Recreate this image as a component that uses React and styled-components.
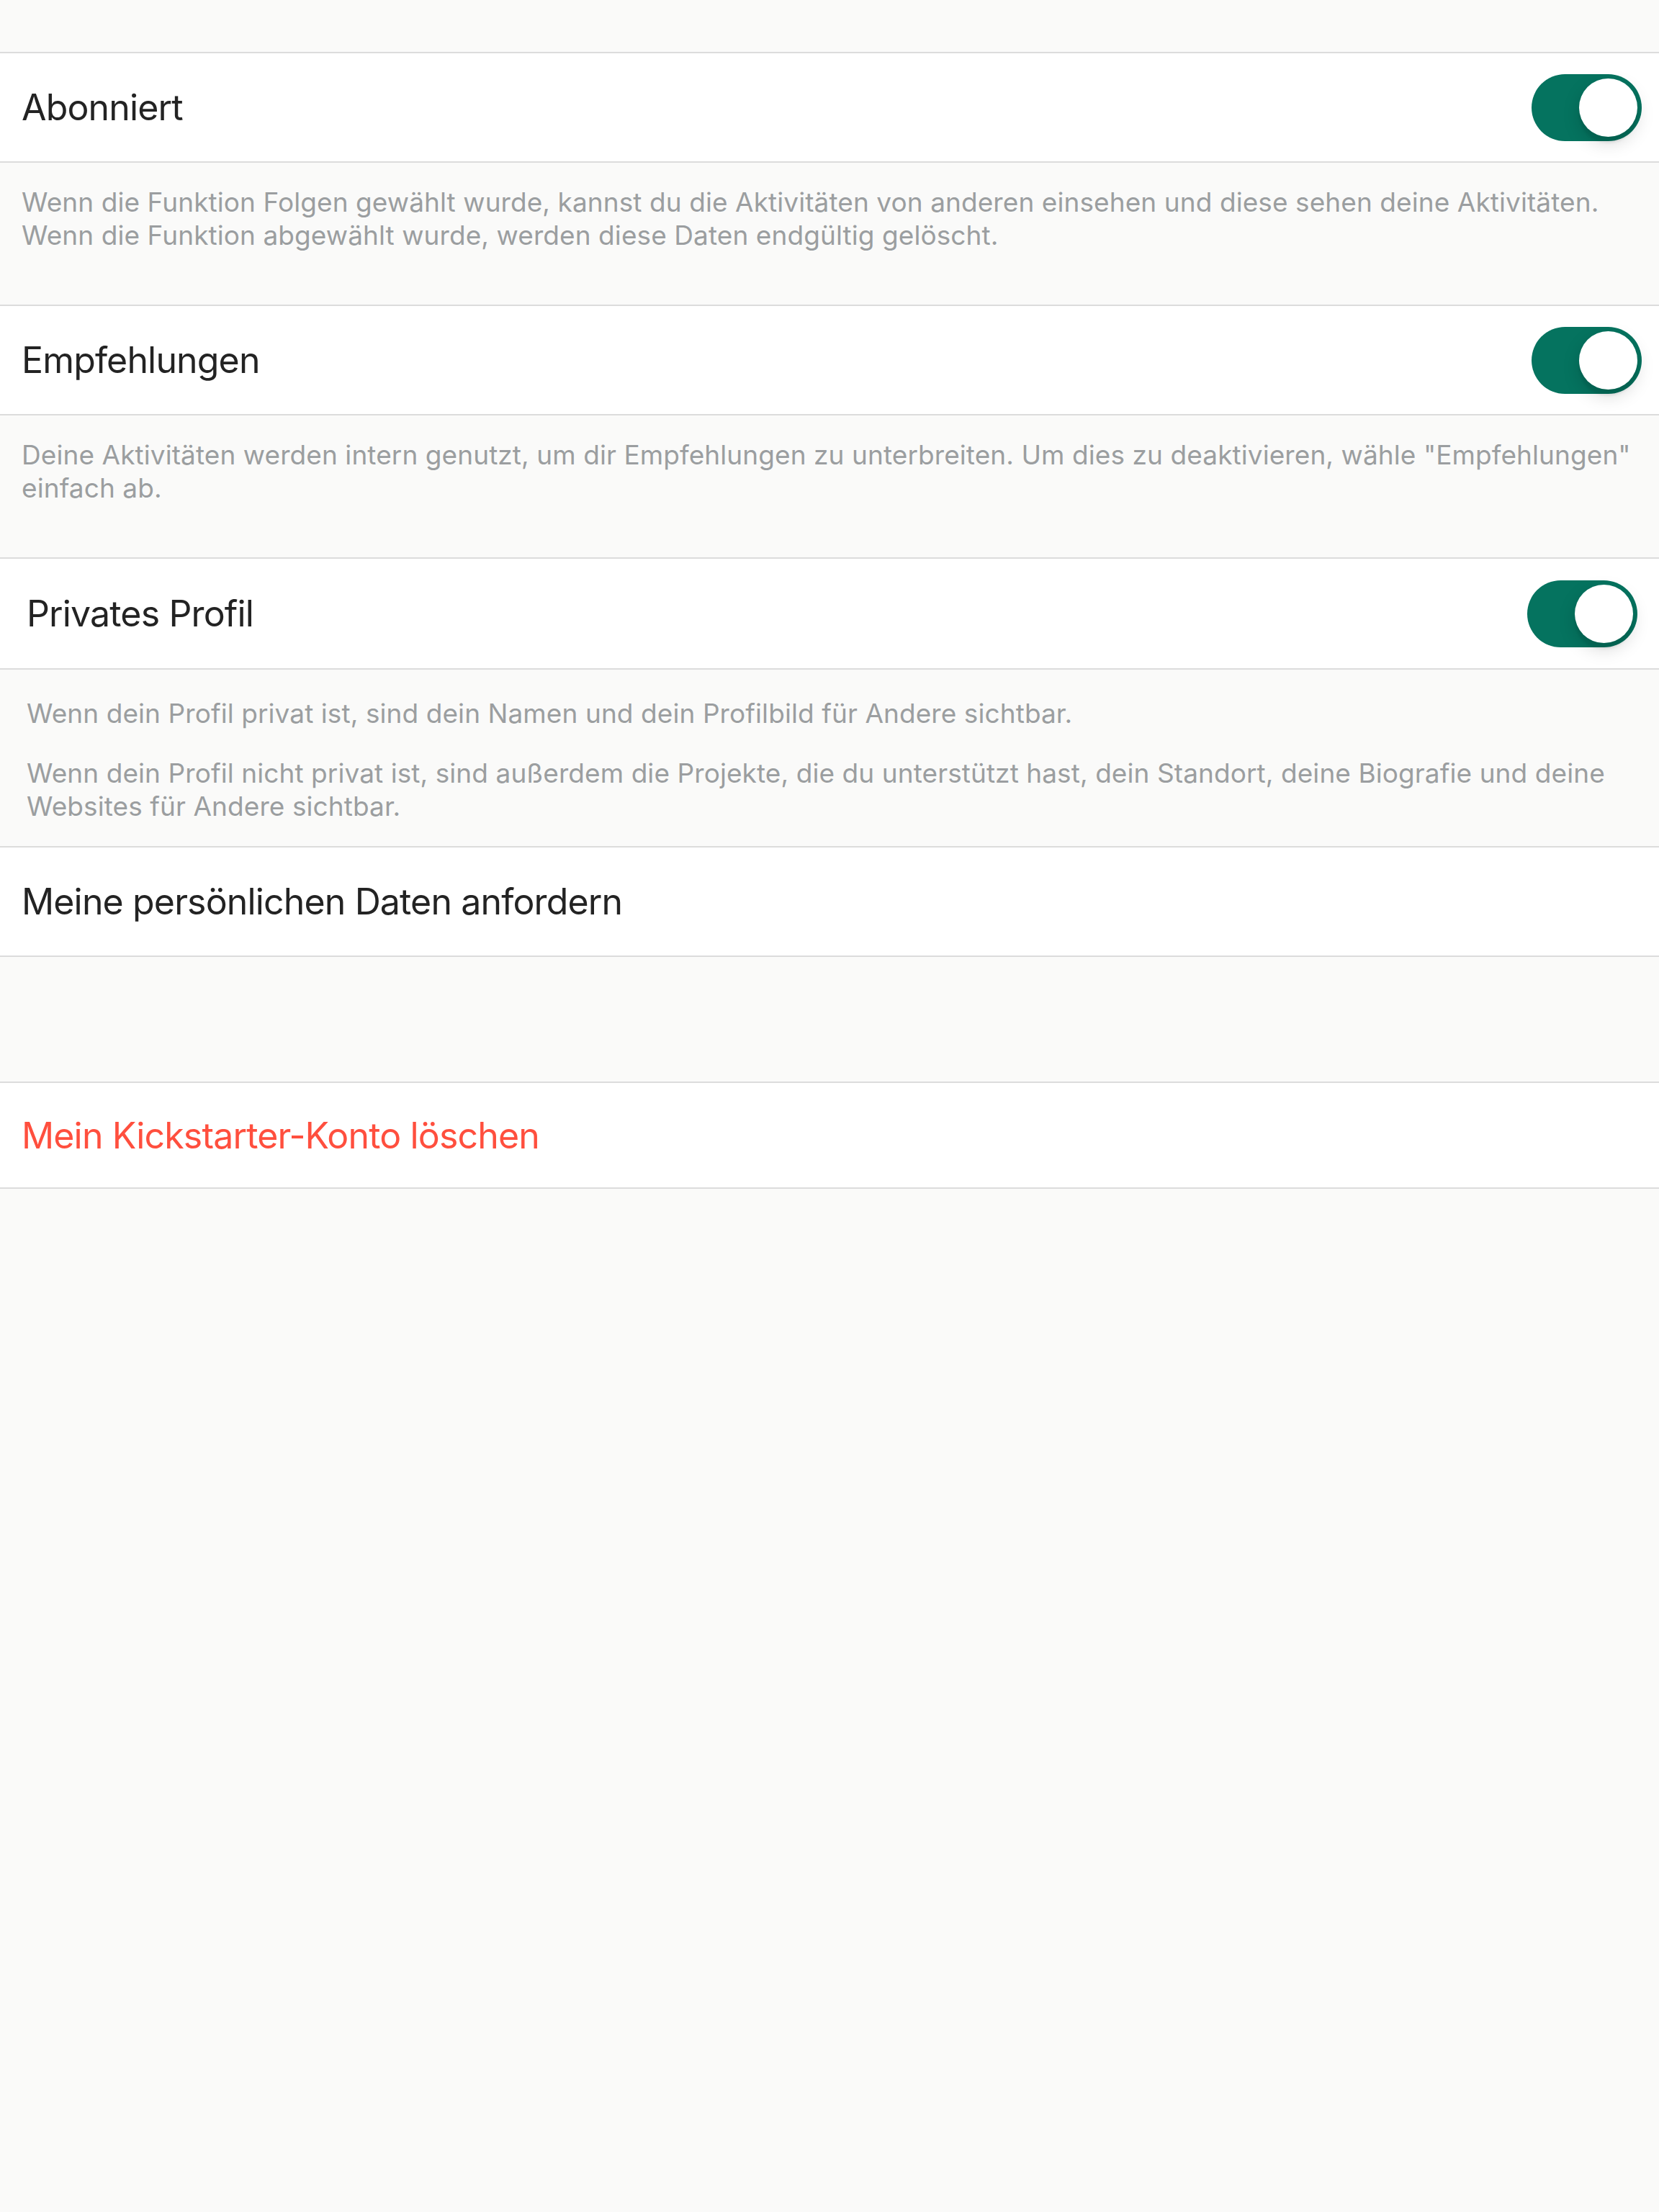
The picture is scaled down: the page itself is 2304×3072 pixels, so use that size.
import React from "react";
import styled, { createGlobalStyle } from "styled-components";

const GlobalStyle = createGlobalStyle`
  html, body {
    margin: 0;
    padding: 0;
    background: #fafaf9;
  }
  body {
    font-family: Inter, "Noto Sans", "Liberation Sans", sans-serif;
    -webkit-font-smoothing: antialiased;
  }
`;

const Page = styled.div`
  min-height: 3072px;
  background: #fafaf9;
  padding-top: 72px;
  box-sizing: border-box;
`;

const Cell = styled.div`
  display: flex;
  align-items: center;
  justify-content: space-between;
  height: ${(p) => p.height || 150}px;
  padding: 0 ${(p) => (p.inset ? 30 : 24)}px 0 ${(p) => (p.inset ? 37 : 30)}px;
  background: #ffffff;
  border-top: 2px solid #dcdcdc;
  border-bottom: 2px solid #dcdcdc;
`;

const CellTitle = styled.span`
  font-size: 50px;
  letter-spacing: -0.85px;
  color: ${(p) => (p.danger ? "#ff4f3e" : "#232323")};
`;

const Footer = styled.div`
  padding: ${(p) => (p.inset ? "38px 37px 32px" : "32px 30px 73px")};
  display: flex;
  flex-direction: column;
  gap: 37px;
`;

const FooterText = styled.p`
  margin: 0;
  font-size: 37px;
  line-height: 46px;
  letter-spacing: 0.08px;
  color: #9b9ea0;
`;

const Gap = styled.div`
  height: 173px;
`;

const Track = styled.div`
  display: flex;
  align-items: center;
  justify-content: ${(p) => (p.on ? "flex-end" : "flex-start")};
  width: 153px;
  height: 93px;
  padding: 6px;
  box-sizing: border-box;
  border-radius: 47px;
  background: ${(p) => (p.on ? "#05735f" : "#e9e9ea")};
  flex-shrink: 0;
`;

const Knob = styled.div`
  width: 81px;
  height: 81px;
  border-radius: 50%;
  background: #ffffff;
  box-shadow: 0 9px 24px rgba(0, 0, 0, 0.15), 0 9px 3px rgba(0, 0, 0, 0.06);
`;

const Toggle = ({ on }) => (
  <Track on={on ? 1 : 0}>
    <Knob />
  </Track>
);

export default function App() {
  return (
    <>
      <GlobalStyle />
      <Page>
        <Cell>
          <CellTitle>Abonniert</CellTitle>
          <Toggle on />
        </Cell>
        <Footer>
          <FooterText>
            Wenn die Funktion Folgen gewählt wurde, kannst du die Aktivitäten von anderen einsehen und diese sehen deine Aktivitäten. Wenn die Funktion abgewählt wurde, werden diese Daten endgültig gelöscht.
          </FooterText>
        </Footer>

        <Cell>
          <CellTitle>Empfehlungen</CellTitle>
          <Toggle on />
        </Cell>
        <Footer>
          <FooterText>
            Deine Aktivitäten werden intern genutzt, um dir Empfehlungen zu unterbreiten. Um dies zu deaktivieren, wähle "Empfehlungen" einfach ab.
          </FooterText>
        </Footer>

        <Cell inset height={152}>
          <CellTitle>Privates Profil</CellTitle>
          <Toggle on />
        </Cell>
        <Footer inset>
          <FooterText>
            Wenn dein Profil privat ist, sind dein Namen und dein Profilbild für Andere sichtbar.
          </FooterText>
          <FooterText>
            Wenn dein Profil nicht privat ist, sind außerdem die Projekte, die du unterstützt hast, dein Standort, deine Biografie und deine Websites für Andere sichtbar.
          </FooterText>
        </Footer>

        <Cell>
          <CellTitle>Meine persönlichen Daten anfordern</CellTitle>
        </Cell>
        <Gap />
        <Cell height={145}>
          <CellTitle danger>Mein Kickstarter-Konto löschen</CellTitle>
        </Cell>
      </Page>
    </>
  );
}
